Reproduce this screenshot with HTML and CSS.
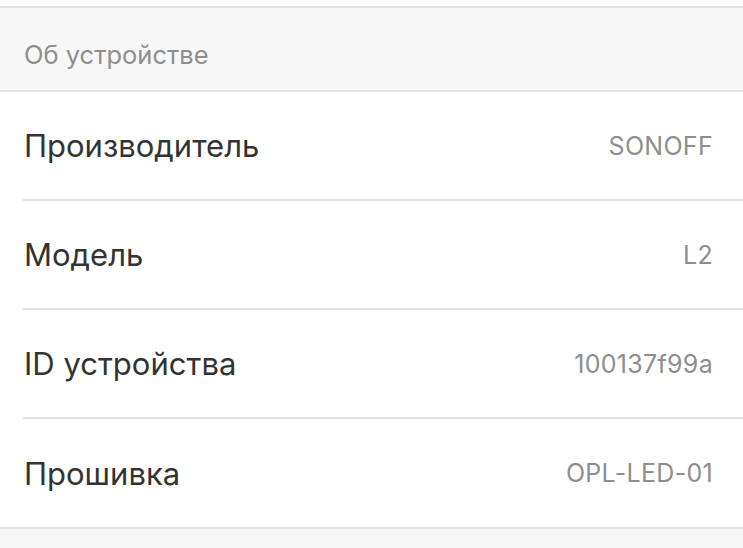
FILE: index.html
```html
<!DOCTYPE html>
<html lang="ru">
<head>
<meta charset="utf-8">
<link rel="stylesheet" href="styles.css">
</head>
<body>
<div class="page">
  <div class="top"></div>
  <div class="section-header">Об устройстве</div>
  <div class="list">
    <div class="row"><span class="label">Производитель</span><span class="value">SONOFF</span></div>
    <div class="row"><span class="label">Модель</span><span class="value">L2</span></div>
    <div class="row"><span class="label">ID устройства</span><span class="value">100137f99a</span></div>
    <div class="row last"><span class="label">Прошивка</span><span class="value">OPL-LED-01</span></div>
  </div>
  <div class="bottom"></div>
</div>
</body>
</html>
```
FILE: styles.css
```css
html, body {
  margin: 0;
  padding: 0;
  background: #f7f7f7;
  font-family: Inter, "Noto Sans", sans-serif;
}
.page {
  width: 743px;
  height: 548px;
  overflow: hidden;
  display: flex;
  flex-direction: column;
}
.top {
  height: 6px;
  background: #fbfbfb;
  border-bottom: 2px solid #e2e2e2;
}
.section-header {
  height: 84px;
  box-sizing: border-box;
  padding-left: 24px;
  padding-top: 10px;
  display: flex;
  align-items: center;
  font-size: 25.5px;
  color: #8e8e8e;
  background: #f7f7f7;
  border-bottom: 2px solid #e2e2e2;
}
.list {
  background: #fff;
  padding-left: 23px;
  border-bottom: 2px solid #e2e2e2;
}
.row {
  height: 109px;
  box-sizing: border-box;
  display: flex;
  align-items: center;
  justify-content: space-between;
  padding-right: 30px;
  border-bottom: 2px solid #e2e2e2;
}
.row.last {
  border-bottom: none;
  height: 108px;
}
.label {
  font-size: 31px;
  color: #333;
  padding-left: 1px;
}
.value {
  font-size: 25px;
  color: #8e8e8e;
  letter-spacing: 0.3px;
}
.bottom {
  flex: 1;
  background: #f7f7f7;
}
```
